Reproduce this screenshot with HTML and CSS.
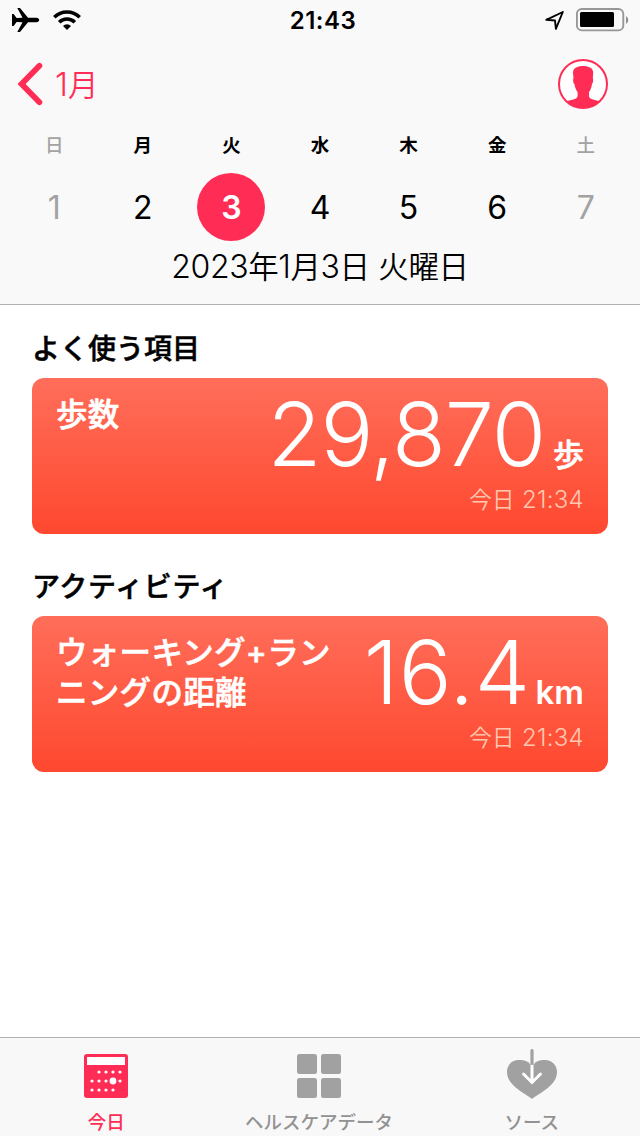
FILE: index.html
```html
<!DOCTYPE html>
<html lang="ja">
<head>
    <meta charset="UTF-8">
    <meta name="viewport" content="width=device-width, initial-scale=1.0">
    <title>ヘルスケア</title>
    <link rel="stylesheet" href="styles.css">
</head>
<body>

<div class="app">
    <header class="header">
        <div class="status-bar">
            <div class="status-left">
                <svg width="28" height="26" viewBox="0 0 28 26">
                    <path d="M0 7 H1.6 L4.6 11 L10.5 10.8 L5.3 1 H8 L16 10.8 H24.6 C26 10.8 27.2 12 27.2 13 C27.2 14 26 15.2 24.6 15.2 H16 L8 25 H5.3 L10.5 15.2 L4.6 15 L1.6 19 H0 Z"/>
                </svg>
                <svg width="28" height="20" viewBox="0 0 28 20" fill="none" stroke="#000" stroke-width="3.6">
                    <path d="M1.3 7.3 A18 18 0 0 1 26.7 7.3"/>
                    <path d="M6.2 12.3 A11 11 0 0 1 21.8 12.3"/>
                    <path d="M14 20 L10 16 A5.7 5.7 0 0 1 18 16 Z" fill="#000" stroke="none"/>
                </svg>
            </div>
            <div class="status-time">21:43</div>
            <div class="status-right">
                <svg width="20" height="20" viewBox="0 0 20 20" fill="none" stroke="#000" stroke-width="1.9" stroke-linejoin="round">
                    <path d="M17.8 2 L1.3 9.8 L10 10.5 L10.9 18.8 Z"/>
                </svg>
                <svg class="battery" width="54" height="24" viewBox="0 0 54 24">
                    <rect x="0.9" y="1" width="46.4" height="21.4" rx="5" fill="none" stroke="#979797" stroke-width="1.9"/>
                    <rect x="4" y="4" width="34" height="15" rx="1.5"/>
                    <path d="M50 8 A4.6 4.6 0 0 1 50 16 Z" fill="#8f8f8f"/>
                </svg>
            </div>
        </div>

        <div class="nav-bar">
            <div class="back">
                <svg width="26" height="44" viewBox="0 0 26 44" fill="none" stroke="#ff2d55" stroke-width="5.8" stroke-linecap="round" stroke-linejoin="miter">
                    <path d="M22.4 3.8 L4.6 22 L22.4 40.2"/>
                </svg>
                <span class="back-label">1<span class="kanji">月</span></span>
            </div>
            <svg width="50" height="50" viewBox="0 0 50 50">
                <circle cx="25" cy="25" r="24" fill="#fff" stroke="#ff2d55" stroke-width="2"/>
                <path fill="#ff2d55" d="M15 14 C15 9 19 7 25 7 C31 7 35.2 9 35.2 14 L34.8 19.5 C35.5 20 35.2 24 34 25 C33.5 28.5 32.6 31 31 33 V37 C31 40 36 41 42 42.2 A24.5 24.5 0 0 1 8 42.2 C14 41 19.6 40 19.6 37 V33 C18 31 17 28.5 16.4 25 C15 24 14.8 20 15.5 19.5 Z"/>
            </svg>
        </div>

        <div class="week">
            <div class="day weekend"><span class="name">日</span><span class="num">1</span></div>
            <div class="day"><span class="name">月</span><span class="num">2</span></div>
            <div class="day"><span class="name">火</span><span class="num selected">3</span></div>
            <div class="day"><span class="name">水</span><span class="num">4</span></div>
            <div class="day"><span class="name">木</span><span class="num">5</span></div>
            <div class="day"><span class="name">金</span><span class="num">6</span></div>
            <div class="day weekend"><span class="name">土</span><span class="num">7</span></div>
        </div>

        <div class="full-date">2023<span class="kanji">年</span>1<span class="kanji">月</span>3<span class="kanji">日</span> <span class="kanji">火曜日</span></div>
    </header>

    <main class="content">
        <h2>よく使う項目</h2>
        <div class="card">
            <div class="card-title">歩数</div>
            <div class="card-data">
                <div class="reading"><span class="value steps">29,870</span><span class="unit">歩</span></div>
                <div class="card-time"><span class="today">今日</span> 21:34</div>
            </div>
        </div>

        <h2 class="kana">アクティビティ</h2>
        <div class="card">
            <div class="card-title">ウォーキング+ラン<br>ニングの距離</div>
            <div class="card-data">
                <div class="reading"><span class="value distance">16.4</span><span class="unit latin">km</span></div>
                <div class="card-time"><span class="today">今日</span> 21:34</div>
            </div>
        </div>
    </main>

    <nav class="tab-bar">
        <div class="tab active">
            <svg width="44" height="52" viewBox="0 0 44 52">
                <rect y="6" width="44" height="44" rx="3" fill="#ff2d55"/>
                <rect x="3" y="9" width="38" height="8" fill="#fff"/>
                <g fill="#fff">
                    <circle cx="15" cy="24" r="1.6"/><circle cx="22" cy="24" r="1.6"/><circle cx="29" cy="24" r="1.6"/><circle cx="36" cy="24" r="1.6"/>
                    <circle cx="8" cy="33" r="1.6"/><circle cx="15" cy="33" r="1.6"/><circle cx="22" cy="33" r="1.6"/><circle cx="29" cy="33" r="3.4"/><circle cx="36" cy="33" r="1.6"/>
                    <circle cx="8" cy="42" r="1.6"/><circle cx="15" cy="42" r="1.6"/><circle cx="22" cy="42" r="1.6"/><circle cx="29" cy="42" r="1.6"/>
                </g>
            </svg>
            <span>今日</span>
        </div>
        <div class="tab">
            <svg width="44" height="52" viewBox="0 0 44 52" fill="#a1a1a1">
                <rect x="0" y="6" width="20" height="20" rx="2.5"/>
                <rect x="24" y="6" width="20" height="20" rx="2.5"/>
                <rect x="0" y="30" width="20" height="20" rx="2.5"/>
                <rect x="24" y="30" width="20" height="20" rx="2.5"/>
            </svg>
            <span>ヘルスケアデータ</span>
        </div>
        <div class="tab">
            <svg width="50" height="52" viewBox="0 0 50 52">
                <path fill="#a1a1a1" d="M25 51 C18 45 0 38 0 24 C0 17 5 12 12 12 C18 12 22.5 14 25 17.5 C27.5 14 32 12 38 12 C45 12 50 17 50 24 C50 38 32 45 25 51 Z"/>
                <path d="M25 14 V34 M16.5 26 L25 34.5 L33.5 26" fill="none" stroke="#fff" stroke-width="3" stroke-linecap="round"/>
                <path d="M25 2.5 V15.5" stroke="#f8f8f8" stroke-width="6"/>
                <path d="M25 2.5 V15.5" stroke="#a1a1a1" stroke-width="3.2" stroke-linecap="round"/>
            </svg>
            <span>ソース</span>
        </div>
    </nav>
</div>

</body>
</html>
```
FILE: styles.css
```css
* {
    box-sizing: border-box;
}
body {
    margin: 0;
    background-color: #fff;
    color: #000;
    font-family: Inter, "Noto Sans CJK JP", sans-serif;
}
svg {
    display: block;
    flex: none;
}
.app {
    display: flex;
    flex-direction: column;
    width: 640px;
    height: 1136px;
    overflow: hidden;
}
.header {
    height: 305px;
    background-color: #f9f9f9;
    border-bottom: 1px solid #b2b2b2;
}

/* Status bar */
.status-bar {
    display: grid;
    grid-template-columns: 1fr auto 1fr;
    align-items: center;
    height: 40px;
    padding: 0 10px 0 12px;
}
.status-left, .status-right {
    display: flex;
    align-items: center;
}
.status-left {
    gap: 13px;
}
.status-right {
    justify-content: flex-end;
    gap: 11px;
}
.status-time {
    padding: 1px 0 0 4px;
    font-size: 24px;
    font-weight: 600;
    letter-spacing: 0.5px;
}

/* Navigation */
.nav-bar {
    display: flex;
    justify-content: space-between;
    align-items: center;
    height: 88px;
    padding: 0 32px 0 17px;
}
.back {
    display: flex;
    align-items: center;
    gap: 12px;
}
.back-label {
    padding-top: 1px;
    color: #ff2d55;
    font-size: 33px;
    font-weight: 350;
    line-height: 44px;
}
.kanji {
    font-size: 30.5px;
}

/* Week strip */
.week {
    display: grid;
    grid-template-columns: repeat(7, 1fr);
    padding: 0 10px;
}
.day {
    display: flex;
    flex-direction: column;
    align-items: center;
}
.name {
    height: 45px;
    padding-top: 1px;
    font-size: 18.5px;
    font-weight: 700;
    line-height: 32px;
}
.num {
    width: 68px;
    height: 68px;
    border-radius: 50%;
    font-size: 32px;
    line-height: 69px;
    text-align: center;
}
.weekend {
    color: #a3a3a3;
}
.weekend .name {
    font-weight: 500;
}
.num.selected {
    background-color: #ff2d55;
    color: #fff;
    font-weight: 600;
}
.full-date {
    font-size: 32px;
    font-weight: 350;
    line-height: 52px;
    letter-spacing: -0.4px;
    text-align: center;
}

/* Cards */
.content {
    flex: 1;
    padding: 25px 32px 0;
}
h2 {
    margin: 0;
    height: 48px;
    font-size: 28px;
    font-weight: 500;
    line-height: 38px;
    -webkit-text-stroke: 0.5px #000;
}
h2.kana {
    letter-spacing: 0.7px;
}
.card {
    display: flex;
    justify-content: space-between;
    height: 156px;
    margin-bottom: 34px;
    padding: 17px 24px 0;
    border-radius: 12px;
    background: linear-gradient(#ff6e5a, #ff482f);
    color: #fff;
}
.card-title {
    font-size: 31.5px;
    font-weight: 500;
    line-height: 40px;
    letter-spacing: 0.3px;
    white-space: nowrap;
    -webkit-text-stroke: 0.6px #fff;
}
.card-data {
    display: flex;
    flex-direction: column;
    align-items: flex-end;
}
.reading {
    display: flex;
    align-items: baseline;
    height: 88px;
    line-height: 78px;
}
.value {
    font-size: 88px;
    font-weight: 300;
}
.steps {
    letter-spacing: -1px;
}
.distance {
    letter-spacing: 0.5px;
}
.unit {
    margin-left: 8px;
    font-size: 31px;
    font-weight: 500;
    -webkit-text-stroke: 0.6px #fff;
}
.unit.latin {
    margin-left: 5px;
    font-size: 33px;
    font-weight: 600;
    -webkit-text-stroke: 0;
}
.card-time {
    color: #ffc8b0;
    font-size: 24px;
    font-weight: 350;
    line-height: 34px;
    letter-spacing: 0.3px;
}
.today {
    font-size: 22.5px;
}

/* Bottom tabs */
.tab-bar {
    display: grid;
    grid-template-columns: repeat(3, 1fr);
    height: 99px;
    padding: 10px 2px 0 0;
    background-color: #f8f8f8;
    border-top: 1px solid #b2b2b2;
}
.tab {
    display: flex;
    flex-direction: column;
    align-items: center;
    color: #929292;
    font-size: 18.5px;
    font-weight: 500;
    line-height: 24px;
}
.tab span {
    margin-top: 10px;
}
.tab.active {
    color: #ff2d55;
}
```
